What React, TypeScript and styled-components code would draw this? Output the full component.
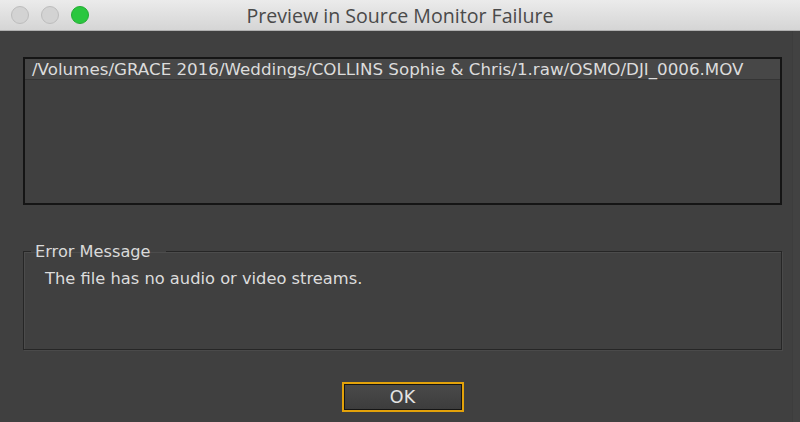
import React from "react";
import styled, { createGlobalStyle } from "styled-components";

const Global = createGlobalStyle`
  html, body { margin: 0; padding: 0; background: #404040; }
  body { width: 800px; height: 422px; overflow: hidden; font-family: "DejaVu Sans", "Open Sans", sans-serif; }
`;

const Window = styled.div`
  width: 800px;
  height: 422px;
  display: flex;
  flex-direction: column;
  background: #404040;
  box-shadow: inset -7px 0 0 #424242, inset -8px 0 0 #3d3d3d;
`;

const TitleBar = styled.div`
  height: 31px;
  flex: none;
  display: flex;
  align-items: center;
  position: relative;
  background: linear-gradient(#ebebeb, #d5d5d5);
  border-bottom: 1px solid #b0b0b0;
  box-sizing: border-box;
`;

const Lights = styled.div`
  display: flex;
  gap: 12px;
  padding-left: 11px;
`;

const Light = styled.div<{ $color: string; $border: string }>`
  width: 18px;
  height: 18px;
  border-radius: 50%;
  box-sizing: border-box;
  background: ${(p) => p.$color};
  border: 1px solid ${(p) => p.$border};
`;

const Title = styled.div`
  position: absolute;
  left: 0;
  right: 0;
  top: 0;
  bottom: 0;
  display: flex;
  align-items: center;
  justify-content: center;
  font-family: "Open Sans", "DejaVu Sans", sans-serif;
  font-size: 19.6px;
  color: #4a4a4a;
  pointer-events: none;
`;

const Body = styled.div`
  flex: 1;
  display: flex;
  flex-direction: column;
  padding: 26px 18px 0 23px;
`;

const ListBox = styled.div`
  height: 148px;
  box-sizing: border-box;
  border: 2px solid #151515;
  background: #404040;
`;

const ListRow = styled.div`
  height: 20px;
  display: flex;
  align-items: center;
  padding-left: 7px;
  background: #474747;
  border-bottom: 1px solid #353535;
  font-size: 16.7px;
  color: #dcdcdc;
  white-space: nowrap;
`;

const Group = styled.fieldset`
  margin: 37px 0 0 0;
  padding: 0 0 0 21px;
  height: 108px;
  box-sizing: border-box;
  border: 1px solid #262626;
  box-shadow: inset 1px 1px 0 #4c4c4c, 1px 1px 0 #4a4a4a;
`;

const Legend = styled.legend`
  margin-left: -14px;
  padding: 0 15px 0 4px;
  font-size: 16.2px;
  color: #dadada;
`;

const Message = styled.div`
  margin-top: 8px;
  font-size: 16.3px;
  color: #dcdcdc;
`;

const Footer = styled.div`
  display: flex;
  justify-content: center;
  padding-top: 32px;
`;

const Button = styled.button`
  width: 122px;
  height: 30px;
  box-sizing: border-box;
  border: 2px solid #e3a20a;
  box-shadow: inset 0 0 0 1px #151515;
  background: linear-gradient(#4a4a4a, #3c3c3c);
  color: #e4e4e4;
  font-family: "DejaVu Sans", sans-serif;
  font-size: 17.5px;
  padding: 0;
`;

export default function App() {
  return (
    <>
      <Global />
      <Window>
        <TitleBar>
          <Lights>
            <Light $color="#d3d3d3" $border="#bdbdbd" />
            <Light $color="#d3d3d3" $border="#bdbdbd" />
            <Light $color="#2ac73f" $border="#22ab33" />
          </Lights>
          <Title>Preview in Source Monitor Failure</Title>
        </TitleBar>
        <Body>
          <ListBox>
            <ListRow>/Volumes/GRACE 2016/Weddings/COLLINS Sophie &amp; Chris/1.raw/OSMO/DJI_0006.MOV</ListRow>
          </ListBox>
          <Group>
            <Legend>Error Message</Legend>
            <Message>The file has no audio or video streams.</Message>
          </Group>
          <Footer>
            <Button>OK</Button>
          </Footer>
        </Body>
      </Window>
    </>
  );
}
